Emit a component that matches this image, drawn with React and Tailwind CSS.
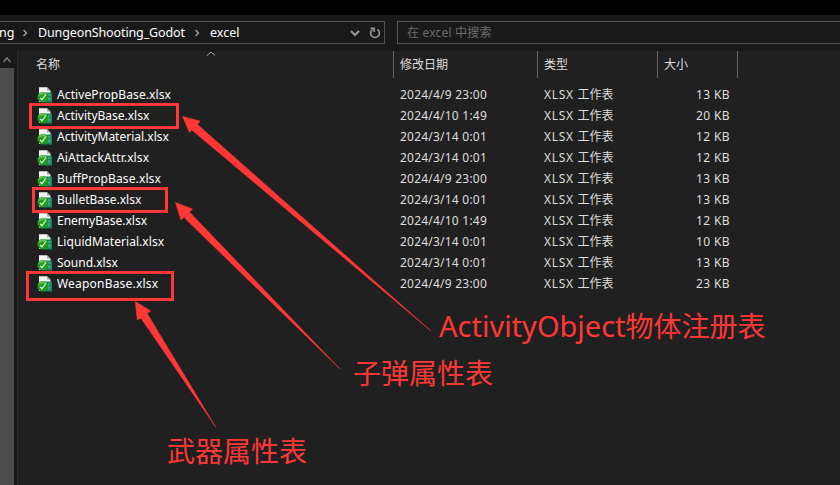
import React from "react";

const files = [
  ["ActivePropBase.xlsx", "2024/4/9 23:00", "13 KB", "tracking-[0.1px]"],
  ["ActivityBase.xlsx", "2024/4/10 1:49", "20 KB", "tracking-[0px]"],
  ["ActivityMaterial.xlsx", "2024/3/14 0:01", "12 KB", "tracking-[0px]"],
  ["AiAttackAttr.xlsx", "2024/3/14 0:01", "12 KB", "tracking-[0.12px]"],
  ["BuffPropBase.xlsx", "2024/4/9 23:00", "13 KB", "tracking-[0.12px]"],
  ["BulletBase.xlsx", "2024/3/14 0:01", "13 KB", "tracking-[0px]"],
  ["EnemyBase.xlsx", "2024/4/10 1:49", "12 KB", "tracking-[0px]"],
  ["LiquidMaterial.xlsx", "2024/3/14 0:01", "10 KB", "tracking-[0.06px]"],
  ["Sound.xlsx", "2024/3/14 0:01", "13 KB", "tracking-[0px]"],
  ["WeaponBase.xlsx", "2024/4/9 23:00", "23 KB", "tracking-[0.2px]"],
];

function Chevron({ className, d, width = 1.5 }) {
  return (
    <svg viewBox="0 0 10 10" className={className} fill="none" stroke="currentColor" strokeWidth={width}>
      <path d={d} />
    </svg>
  );
}

function FileIcon() {
  return (
    <svg viewBox="0 0 16 16" className="h-4 w-4 shrink-0">
      <path d="M2 .3h8l3.500 3.500V15H2z" fill="#f1f4f3" />
      <path d="M10 .3v3.500h3.500z" fill="#aab5b1" />
      <path d="M7.500 5.500H15v10H7.500z" fill="#1a8560" />
      <path d="M11 7h2.500v2H11zM11 10h2.500v3.500H11z" fill="#43a07c" />
      <circle cx="5.800" cy="10.300" r="5.300" fill="#229a1c" />
      <path d="M.8 9.500a5 5 0 0 1 9.500-1.500C7 7 4 7.500.8 9.500z" fill="#5cc24c" />
      <path d="M3.200 10.800l1.700 2 4-5.300" fill="none" stroke="#eafbe6" strokeWidth="1.200" />
    </svg>
  );
}

export default function App() {
  return (
    <div className="relative flex h-[485px] w-[840px] flex-col overflow-hidden bg-[#202020] text-[12px] leading-[21px] whitespace-pre text-[#dedede] [font-family:'Noto_Sans','Noto_Sans_CJK_SC',sans-serif]">
      <div className="h-[15px] shrink-0 bg-black" />
      <header className="flex h-9 shrink-0 gap-3 bg-[#191919] pt-[6px]">
        <div className="flex h-[23px] w-[385px] items-center border border-l-0 border-[#535353] text-[12.5px] text-white">
          <span className="-ml-[1px] w-[20px]">ng</span>
          <Chevron className="ml-[1px] h-[10px] w-[10px] text-[#999]" d="M3.500 2l3 3-3 3" />
          <span className="ml-2 w-[149px] tracking-[-0.12px]">DungeonShooting_Godot</span>
          <Chevron className="ml-[5px] h-[10px] w-[10px] text-[#999]" d="M3.500 2l3 3-3 3" />
          <span className="ml-2">excel</span>
          <Chevron className="ml-auto h-[10px] w-[10px] text-[#999]" d="M1 3l4 4 4-4" width={2} />
          <svg viewBox="0 0 12 12" className="mr-[3px] ml-[9px] h-3 w-3 text-[#999]" fill="none" stroke="currentColor" strokeWidth="1.600">
            <path d="M8.500 2.500a4.400 4.400 0 1 1-5 0M1.500 1.200h3.700v3.800" />
          </svg>
        </div>
        <div className="flex h-[23px] flex-1 items-center border border-r-0 border-[#535353] pl-[9px] tracking-[0.2px] text-[#6d6d6d]">在 excel 中搜索</div>
      </header>
      <div className="flex min-h-0 flex-1">
        <aside className="flex w-[14px] flex-col bg-[#4d4d4d]">
          <div className="flex h-[17px] items-center justify-center bg-[#191919]">
            <Chevron className="h-[10px] w-[10px] text-[#777]" d="M1.500 7L5 3l3.500 4" />
          </div>
        </aside>
        <div className="w-[4px] border-r border-[#2b2b2b] bg-[#191919]" />
        <main className="relative flex-1">
          <div className="flex h-[27px] items-center leading-[28px]">
            <div className="w-[375px] pl-[18px]">名称</div>
            <div className="h-[27px] w-36 border-l border-[#636363] pl-[6px]">修改日期</div>
            <div className="h-[27px] w-[120px] border-l border-[#636363] pl-[6px]">类型</div>
            <div className="h-[27px] w-20 border-l border-[#636363] pl-[6px]">大小</div>
            <div className="h-[27px] border-l border-[#636363]" />
          </div>
          <Chevron className="absolute top-[-2px] left-[188px] h-[10px] w-[10px] text-[#aaa]" d="M1 6.500L5 3l4 3.500" width={1} />
          <div className="pt-[6px]">
            {files.map(([name, date, size, tracking]) => (
              <div key={name} className="flex h-[21px] items-center">
                <div className="flex w-[382px] items-center gap-[4px] pl-[19px] text-white">
                  <FileIcon />
                  <span className={tracking}>{name}</span>
                </div>
                <span className="w-36 tracking-[0.22px]">{date}</span>
                <span className="w-[120px]"><span className="tracking-[0.7px]">XLSX </span>工作表</span>
                <span className="w-[66px] text-right tracking-[0.4px]">{size}</span>
              </div>
            ))}
          </div>
        </main>
      </div>
      <div className="absolute top-[103px] left-[29px] h-[26px] w-[150px] border-3 border-[#ff3737]" />
      <div className="absolute top-[187px] left-[32px] h-[26px] w-[136px] border-3 border-[#ff3737]" />
      <div className="absolute top-[271px] left-[26px] h-[30px] w-[148px] border-3 border-[#ff3737]" />
      <svg viewBox="0 0 840 485" className="absolute inset-0 h-[485px] w-[840px]" fill="#ff3737" stroke="#ff3737" strokeWidth="0.500">
        <path d="M182.500 116.500L200 121L197.500 124.500L431 331L191.800 130L189.500 132.500z" />
        <path d="M175.500 202.500L192.500 209L189.500 212L340 369L184 217.500L181 220z" />
        <path d="M135.300 301.500L150.700 311L147 313.200L215.700 427L141 318.200L137.200 319.700z" />
      </svg>
      <div className="absolute top-[306px] left-[439px] text-[28px] leading-[40px] text-[#ff3737]"><span className="text-[29px]">ActivityObject</span>物体注册表</div>
      <div className="absolute top-[353px] left-[353px] text-[28px] leading-[40px] text-[#ff3737]">子弹属性表</div>
      <div className="absolute top-[431px] left-[167px] text-[28px] leading-[40px] text-[#ff3737]">武器属性表</div>
    </div>
  );
}
